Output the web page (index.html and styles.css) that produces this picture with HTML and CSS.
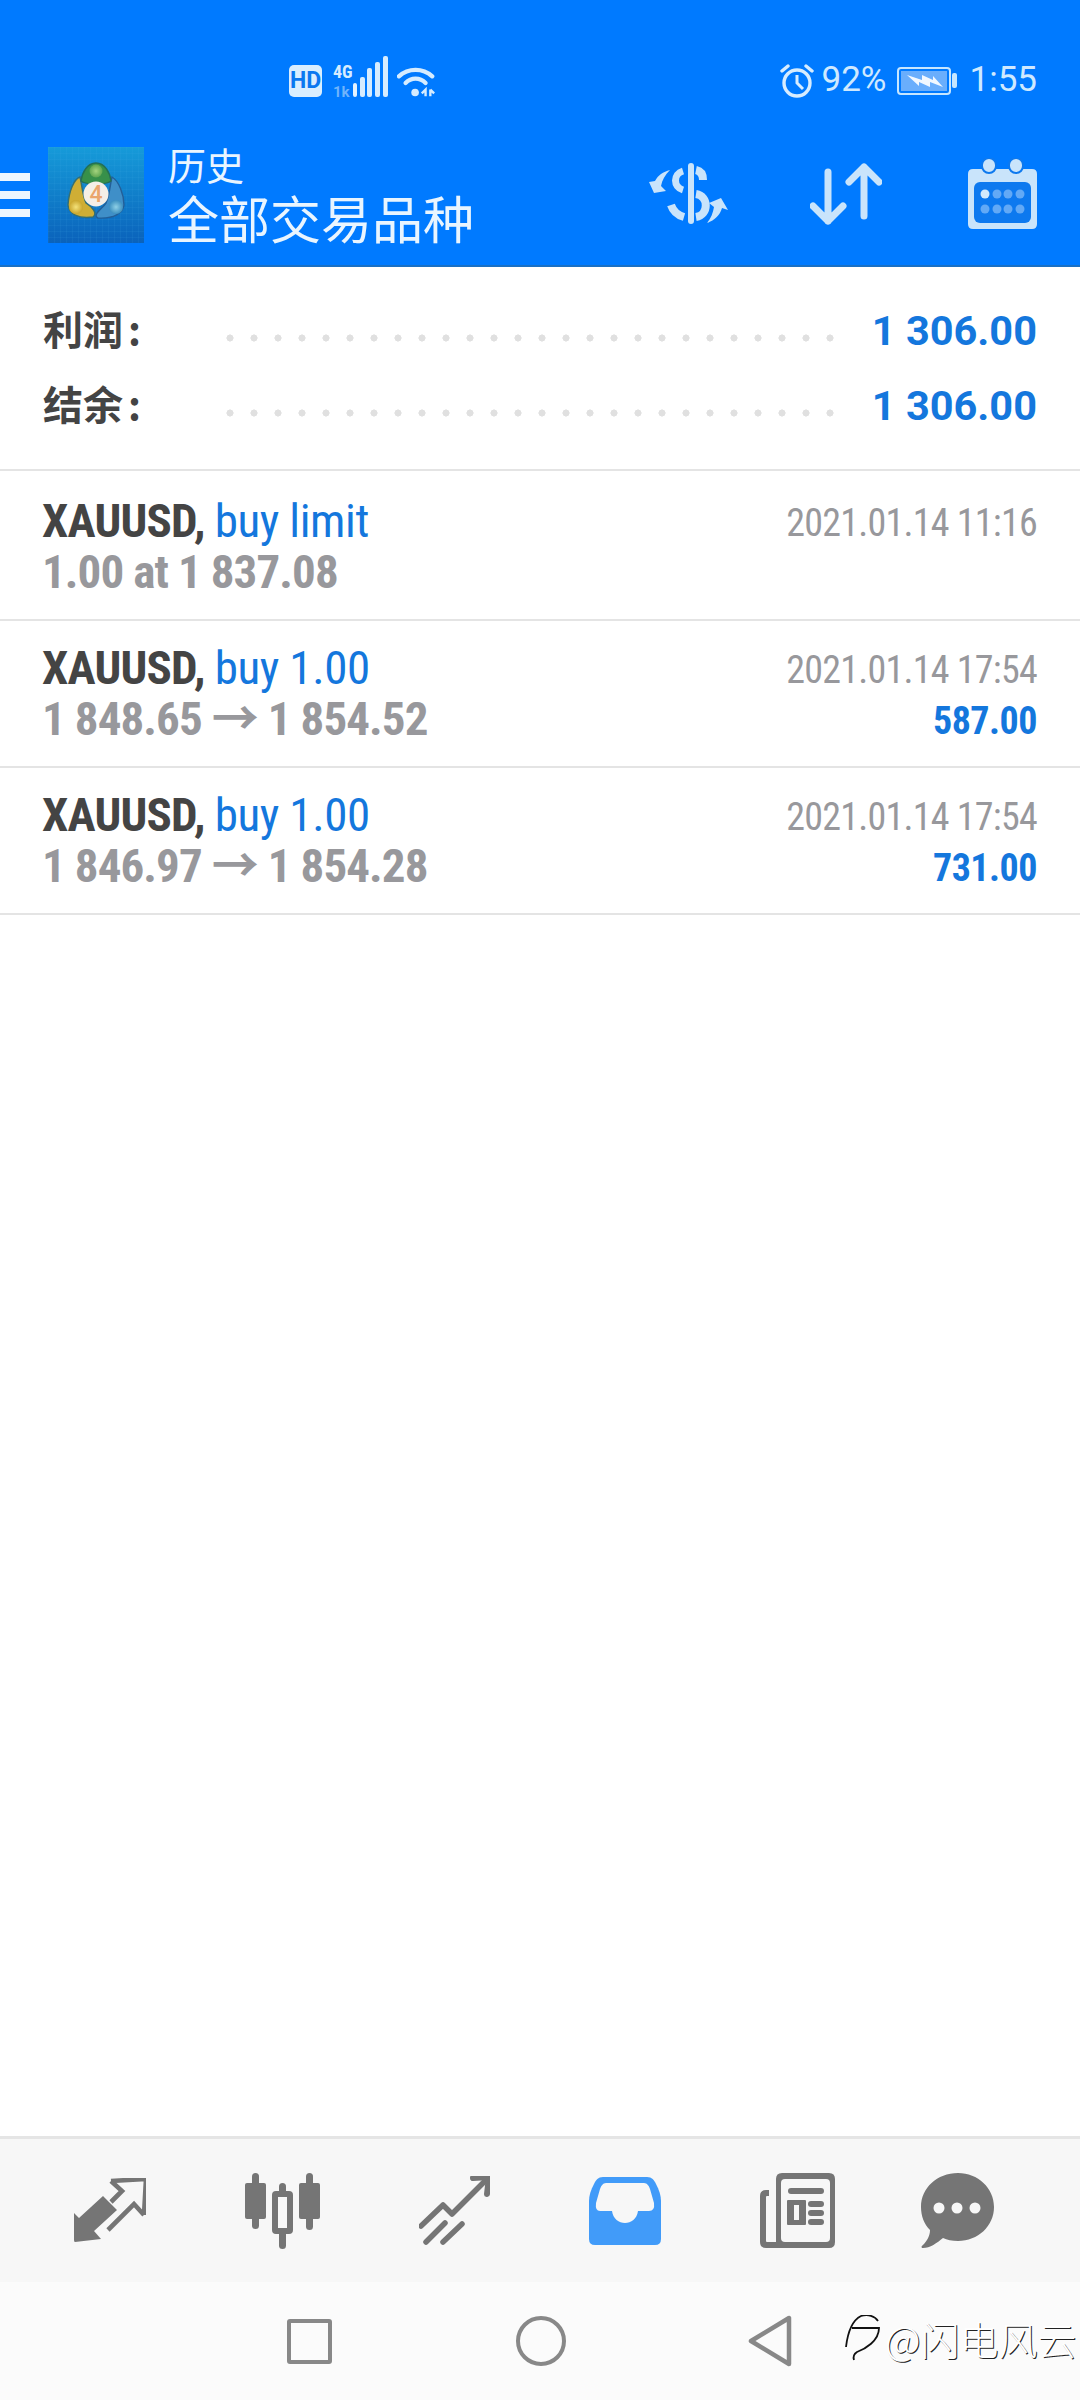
FILE: index.html
```html
<!DOCTYPE html>
<html lang="en">

<head>
  <meta charset="UTF-8">
  <meta name="viewport" content="width=device-width, initial-scale=1.0">
  <title>历史</title>
  <link rel="stylesheet" href="styles.css">
</head>

<body>
  <div class="phone">
    <header class="appbar">
      <div class="statusbar">
        <div class="status-left">
          <span class="hd-badge">HD</span>
          <div class="signal">
            <div class="signal-labels">
              <span class="net-type">4G</span>
              <span class="net-rate">1k</span>
            </div>
            <svg class="signal-bars" width="36" height="42" viewBox="0 0 36 42">
              <rect x="1" y="28" width="4" height="14" rx="2" fill="#e4f3ff" />
              <rect x="8" y="22" width="5" height="20" rx="2" fill="#d6ecff" />
              <rect x="15" y="13" width="5" height="29" rx="2" fill="#d6ecff" />
              <rect x="23" y="7" width="5" height="35" rx="2" fill="#d6ecff" />
              <rect x="31" y="1" width="5" height="41" rx="2" fill="#d6ecff" />
            </svg>
          </div>
          <svg class="wifi" width="40" height="32" viewBox="0 0 42 32">
            <path d="M2 10 C12 1 27 1 37 10" fill="none" stroke="#d6ecff" stroke-width="4.5" stroke-linecap="round" />
            <path d="M9 17 C15 11 24 11 30 17" fill="none" stroke="#d6ecff" stroke-width="4.5" stroke-linecap="round" />
            <circle cx="19" cy="27" r="4" fill="#d6ecff" />
            <path d="M30 31 L30 24 L26 28 M35 24 L35 31 M35 24 L39 28" fill="none" stroke="#d6ecff" stroke-width="2.5" />
          </svg>
        </div>
        <div class="status-right">
          <svg class="alarm" width="34" height="34" viewBox="0 0 34 34">
            <circle cx="17" cy="19" r="13" fill="none" stroke="#d6ecff" stroke-width="3.4" />
            <path d="M17 11 L17 19 L23 25" fill="none" stroke="#d6ecff" stroke-width="3" />
            <path d="M2 7 L8 2 M32 7 L26 2" stroke="#d6ecff" stroke-width="3.4" stroke-linecap="round" />
          </svg>
          <span class="status-text percent">92%</span>
          <svg class="battery" width="60" height="28" viewBox="0 0 60 28">
            <rect x="1" y="1" width="52" height="26" rx="3" fill="none" stroke="#c6e6ff" stroke-width="2" />
            <rect x="4" y="4" width="46" height="20" fill="#6aaefc" />
            <path d="M10 8 L25 13 L25 8 L36 13 L36 9 L46 20 L33 15 L33 20 L22 15 L22 19 Z" fill="#f2f8ff" />
            <rect x="55" y="6" width="5" height="15" rx="2" fill="#c6e6ff" />
          </svg>
          <span class="status-text">1:55</span>
        </div>
      </div>

      <div class="toolbar">
        <div class="menu-icon">
          <span></span>
          <span></span>
          <span></span>
        </div>
        <svg class="app-logo" width="96" height="96" viewBox="0 0 96 96">
          <defs>
            <linearGradient id="logoBg" x1="0" y1="0" x2="0" y2="1">
              <stop offset="0" stop-color="#169bd9" />
              <stop offset="1" stop-color="#0a62bb" />
            </linearGradient>
            <pattern id="logoGrid" width="6" height="6" patternUnits="userSpaceOnUse">
              <path d="M6 0 L0 0 L0 6" fill="none" stroke="#4cb4e6" stroke-opacity="0.18" />
            </pattern>
            <radialGradient id="ballGreen">
              <stop offset="0" stop-color="#a5d47f" />
              <stop offset="1" stop-color="#5fa550" />
            </radialGradient>
            <radialGradient id="ballYellow">
              <stop offset="0" stop-color="#f4e27a" />
              <stop offset="1" stop-color="#c9a52c" />
            </radialGradient>
            <radialGradient id="ballBlue">
              <stop offset="0" stop-color="#8fd0e6" />
              <stop offset="1" stop-color="#3c8fbf" />
            </radialGradient>
          </defs>
          <rect width="96" height="96" fill="url(#logoBg)" />
          <rect width="96" height="96" fill="url(#logoGrid)" />
          <path d="M32 30 C26 32 21 44 20 58 C21 67 30 72 45 70 C50 66 44 60 38 56 C34 46 34 38 32 30 Z" fill="#cfae35" stroke="#356f72" stroke-width="1.4" />
          <path d="M64 30 C71 34 76 48 76 58 C75 66 66 72 50 71 C44 68 54 62 58 56 C62 46 62 38 64 30 Z" fill="#3f8fc8" stroke="#235f98" stroke-width="1.4" />
          <path d="M48 16 C57 16 62 26 63 34 C58 38 38 38 33 34 C34 26 39 16 48 16 Z" fill="#37904a" stroke="#246f55" stroke-width="1.4" />
          <circle cx="48" cy="24" r="6.5" fill="url(#ballGreen)" />
          <circle cx="28" cy="60" r="7" fill="url(#ballYellow)" />
          <circle cx="68" cy="60" r="7" fill="url(#ballBlue)" />
          <circle cx="48" cy="47" r="12.5" fill="#f5efe7" />
          <text class="logo-digit" x="48" y="55" text-anchor="middle">4</text>
        </svg>
        <div class="toolbar-title">
          <div class="title-small">历史</div>
          <div class="title-large">全部交易品种</div>
        </div>
        <div class="toolbar-actions">
          <svg width="80" height="62" viewBox="0 0 80 62">
            <rect x="39" y="0" width="6" height="61" rx="3" fill="#c9e4fb" />
            <path d="M47 7 C52 8 54 12 54 17" fill="none" stroke="#c9e4fb" stroke-width="8" />
            <path d="M34 8 C24 11 24 24 34 27" fill="none" stroke="#c9e4fb" stroke-width="7" />
            <path d="M47 31 C60 33 60 52 47 54" fill="none" stroke="#c9e4fb" stroke-width="8" />
            <path d="M22 42 C24 48 28 52 35 54" fill="none" stroke="#c9e4fb" stroke-width="8" />
            <path d="M21 7 C14 9 9 12 6 18 L0 19 L5 30 L17 28 L12 23 C13 17 16 12 21 7 Z" fill="#c9e4fb" />
            <path d="M58 60 C66 57 71 52 73 45 L79 47 L72 35 L60 40 L65 44 C64 50 62 55 58 60 Z" fill="#c9e4fb" />
          </svg>
          <svg width="72" height="62" viewBox="0 0 72 62">
            <path d="M18 9 L18 58 M3 43 L18 58 L33 43" fill="none" stroke="#c9e4fb" stroke-width="7" stroke-linecap="round" stroke-linejoin="round" />
            <path d="M54 4 L54 53 M39 19 L54 4 L69 19" fill="none" stroke="#c9e4fb" stroke-width="7" stroke-linecap="round" stroke-linejoin="round" />
          </svg>
          <svg class="calendar-icon" width="69" height="71" viewBox="0 0 69 71">
            <path d="M5 11 H64 Q69 11 69 16 V66 Q69 71 64 71 H5 Q0 71 0 66 V16 Q0 11 5 11 Z" fill="#c9e4fb" />
            <rect x="6" y="24" width="57" height="41" rx="6" fill="#0d79ef" />
            <rect x="14" y="0" width="14" height="15" rx="7" fill="#c9e4fb" stroke="#0d79ef" stroke-width="2" />
            <rect x="41" y="0" width="14" height="15" rx="7" fill="#c9e4fb" stroke="#0d79ef" stroke-width="2" />
            <circle cx="17" cy="36" r="4.5" fill="#d4eafc" />
            <circle cx="29" cy="36" r="4.5" fill="#62a9f6" />
            <circle cx="40" cy="36" r="4.5" fill="#62a9f6" />
            <circle cx="52" cy="36" r="4.5" fill="#62a9f6" />
            <circle cx="17" cy="51" r="4.5" fill="#62a9f6" />
            <circle cx="29" cy="51" r="4.5" fill="#62a9f6" />
            <circle cx="40" cy="51" r="4.5" fill="#62a9f6" />
            <circle cx="52" cy="51" r="4.5" fill="#62a9f6" />
          </svg>
        </div>
      </div>
    </header>

    <main class="content">
      <section class="summary">
        <div class="summary-row">
          <span class="summary-label">利润 :</span>
          <span class="summary-dots"></span>
          <span class="summary-value">1 306.00</span>
        </div>
        <div class="summary-row">
          <span class="summary-label">结余 :</span>
          <span class="summary-dots"></span>
          <span class="summary-value">1 306.00</span>
        </div>
      </section>

      <section class="trade-list">
        <div class="trade-row first">
          <div>
            <div class="trade-name">XAUUSD, <span class="trade-side">buy limit</span></div>
            <div class="trade-price">1.00 at 1 837.08</div>
          </div>
          <div class="trade-right">
            <div class="trade-date">2021.01.14 11:16</div>
          </div>
        </div>
        <div class="trade-row">
          <div>
            <div class="trade-name">XAUUSD, <span class="trade-side">buy 1.00</span></div>
            <div class="trade-price">1 848.65 → 1 854.52</div>
          </div>
          <div class="trade-right">
            <div class="trade-date">2021.01.14 17:54</div>
            <div class="trade-profit">587.00</div>
          </div>
        </div>
        <div class="trade-row">
          <div>
            <div class="trade-name">XAUUSD, <span class="trade-side">buy 1.00</span></div>
            <div class="trade-price">1 846.97 → 1 854.28</div>
          </div>
          <div class="trade-right">
            <div class="trade-date">2021.01.14 17:54</div>
            <div class="trade-profit">731.00</div>
          </div>
        </div>
      </section>
    </main>

    <nav class="tabbar">
      <svg width="72" height="66" viewBox="0 0 72 66">
        <path d="M0 35 L5 40 L29 18 L43 32 L20 53 L27 61 L1 64 Q0 64 0 62 Z" fill="#757575" />
        <path d="M37 3 L72 1 L70 37 M37 3 L48 13 L37 24 M34 52 L60 26 L70 37" fill="none" stroke="#757575" stroke-width="4.6" />
      </svg>
      <svg width="75" height="76" viewBox="0 0 75 76">
        <rect x="0" y="10" width="21" height="36" rx="2" fill="#757575" />
        <rect x="7" y="0" width="7" height="56" rx="3.5" fill="#757575" />
        <rect x="54" y="10" width="21" height="36" rx="2" fill="#757575" />
        <rect x="61" y="0" width="7" height="57" rx="3.5" fill="#757575" />
        <rect x="34" y="10" width="7" height="66" rx="3.5" fill="#757575" />
        <rect x="30" y="21" width="15" height="37" rx="1" fill="#f7f7f7" stroke="#757575" stroke-width="6" />
      </svg>
      <svg width="71" height="69" viewBox="0 0 71 69">
        <path d="M2 50 L24 29 L33 38 L66 5" fill="none" stroke="#757575" stroke-width="5.5" stroke-linecap="round" stroke-linejoin="round" />
        <path d="M54 2 L70 1 L68 18" fill="none" stroke="#757575" stroke-width="6" stroke-linecap="round" stroke-linejoin="round" />
        <path d="M7 66 L26 47 M24 66 L43 48" fill="none" stroke="#757575" stroke-width="5.5" stroke-linecap="round" />
      </svg>
      <svg width="72" height="68" viewBox="0 0 72 68">
        <path d="M14 0 H58 C63 0 65 3 67 7 C70 13 72 18 72 24 V62 Q72 68 66 68 H6 Q0 68 0 62 V24 C0 18 2 13 5 7 C7 3 9 0 14 0 Z" fill="#419bf9" />
        <path d="M17 6 H55 C58 6 60 9 61 12 L65 26 Q66 34 60 34 H49 C47 50 25 50 23 34 H11 Q6 34 7 26 L11 12 C12 9 14 6 17 6 Z" fill="#f7f7f7" />
      </svg>
      <svg width="75" height="75" viewBox="0 0 75 75">
        <path d="M16 6 Q16 0 22 0 H69 Q75 0 75 6 V69 Q75 75 69 75 H6 Q0 75 0 69 V23 Q0 17 6 17 H9 V23 H7 Q6 23 6 24 V68 Q6 69 7 69 H16 Z" fill="#757575" />
        <rect x="21" y="6" width="49" height="63" rx="4" fill="#f7f7f7" />
        <rect x="28" y="15" width="36" height="6" rx="3" fill="#757575" />
        <rect x="27" y="27" width="19" height="25" rx="1" fill="#757575" />
        <rect x="34" y="32" width="5" height="15" fill="#f7f7f7" />
        <rect x="48" y="28" width="16" height="6" rx="3" fill="#757575" />
        <rect x="48" y="37" width="16" height="6" rx="3" fill="#757575" />
        <rect x="48" y="46" width="16" height="6" rx="3" fill="#757575" />
      </svg>
      <svg class="chat-icon" width="73" height="75" viewBox="0 0 73 75">
        <path d="M37 0 C57 0 73 15 73 34 C73 53 57 68 37 68 C31 68 26 67 22 65 C16 70 9 75 2 75 C0 75 0 73 2 72 C6 68 9 63 9 57 C3 51 0 43 0 34 C0 15 16 0 37 0 Z" fill="#757575" />
        <circle cx="18" cy="35" r="5.5" fill="#f7f7f7" />
        <circle cx="36" cy="35" r="5.5" fill="#f7f7f7" />
        <circle cx="54" cy="35" r="5.5" fill="#f7f7f7" />
      </svg>
    </nav>

    <div class="navbar">
      <span class="nav-square"></span>
      <span class="nav-circle"></span>
      <svg class="nav-back" width="44" height="52" viewBox="0 0 44 52">
        <path d="M3 26 L41 3 L41 49 Z" fill="none" stroke="#888" stroke-width="4.5" stroke-linejoin="round" />
      </svg>
      <!-- watermark sits on top of the nav bar -->
      <div class="watermark">
        <svg width="38" height="46" viewBox="0 0 38 46">
          <path d="M1 32 C3 15 8 5 16 1 C23 -1 30 1 33 6" fill="none" stroke="#111" stroke-width="1.8" />
          <path d="M7 13 H34 C34 26 20 34 12 37 C9 39 8 42 9 45" fill="none" stroke="#111" stroke-width="1.8" />
        </svg>
        <span>@闪电风云</span>
      </div>
    </div>
  </div>
</body>

</html>
```

FILE: styles.css
```css
* {
  box-sizing: border-box;
}

body {
  margin: 0;
  padding: 0;
  background-color: #fff;
  font-family: Roboto, 'Noto Sans CJK SC', sans-serif;
}

.phone {
  width: 1080px;
  height: 2400px;
  display: flex;
  flex-direction: column;
  overflow: hidden;
}

/* Top blue area */
.appbar {
  height: 267px;
  background-color: #007aff;
  border-bottom: 2px solid #1a70c4;
}

.statusbar {
  height: 128px;
  display: flex;
  justify-content: space-between;
  padding: 64px 43px 0 289px;
}

.status-left,
.status-right {
  display: flex;
  align-items: flex-start;
}

.hd-badge {
  width: 33px;
  height: 32px;
  margin-top: 1px;
  background-color: #d9eeff;
  border-radius: 5px;
  color: #0a78f0;
  font-size: 23px;
  font-weight: 700;
  line-height: 32px;
  text-align: center;
}

.signal {
  display: flex;
  margin-left: 11px;
}

.signal-labels {
  display: flex;
  flex-direction: column;
  width: 19px;
}

.net-type {
  color: #d6ecff;
  font-size: 18px;
  font-stretch: 75%;
  font-weight: 700;
  line-height: 16px;
}

.net-rate {
  margin-top: 5px;
  color: #6fb4fb;
  font-size: 15px;
  font-weight: 700;
  line-height: 15px;
}

.signal-bars {
  margin-top: -9px;
}

.wifi {
  margin: 2px 0 0 9px;
}

.status-text {
  margin-top: -1px;
  color: #cfe9ff;
  font-size: 35px;
  line-height: 34px;
}

.percent {
  margin: -1px 10px 0 8px;
}

.battery {
  margin: 3px 13px 0 0;
}

.toolbar {
  height: 134px;
  display: flex;
  align-items: center;
  padding-right: 43px;
}

.menu-icon {
  display: flex;
  flex-direction: column;
  gap: 10px;
  width: 30px;
}

.menu-icon span {
  height: 8px;
  background-color: #ecf6ff;
}

.app-logo {
  margin-left: 18px;
}

.logo-digit {
  fill: #eaa56c;
  font-family: Roboto, sans-serif;
  font-size: 23px;
  font-weight: 500;
}

.toolbar-title {
  margin-left: 24px;
  color: #e9f5ff;
  font-family: 'Noto Sans CJK SC', sans-serif;
}

.title-small {
  font-size: 38px;
  line-height: 44px;
}

.title-large {
  font-size: 51px;
  line-height: 62px;
}

.toolbar-actions {
  display: flex;
  align-items: center;
  gap: 81px;
  margin: -3px 0 0 auto;
}

.calendar-icon {
  margin-left: 5px;
}

/* Summary and trades */
.content {
  flex: 1;
  background-color: #fff;
}

.summary {
  padding: 26px 43px 26px;
  border-bottom: 2px solid #e4e4e4;
}

.summary-row {
  display: flex;
  align-items: center;
  height: 75px;
}

.summary-label {
  width: 175px;
  margin-top: -6px;
  color: #444;
  font-family: 'Noto Sans CJK SC', sans-serif;
  font-size: 40px;
  font-weight: 700;
  word-spacing: -4px;
}

.summary-dots {
  width: 624px;
  height: 8px;
  margin-top: 14px;
  background-image: radial-gradient(circle, #e0e0e0 3.3px, transparent 3.8px);
  background-size: 24px 8px;
  background-repeat: repeat-x;
}

.summary-value {
  margin-left: auto;
  color: #1477dd;
  font-size: 41.5px;
  font-weight: 700;
  white-space: nowrap;
}

.trade-row {
  display: flex;
  justify-content: space-between;
  padding: 21px 43px 22px 42px;
  border-bottom: 2px solid #e4e4e4;
}

.trade-row.first {
  padding-top: 24px;
}

.trade-name,
.trade-price,
.trade-date,
.trade-profit {
  font-stretch: 75%;
  line-height: 51px;
  white-space: nowrap;
}

.trade-name {
  color: #444;
  font-size: 47px;
  font-weight: 700;
  letter-spacing: -0.8px;
}

.trade-side {
  color: #1477dd;
  font-weight: 400;
  letter-spacing: -0.4px;
}

.trade-price {
  color: #98989c;
  font-size: 47px;
  font-weight: 700;
  letter-spacing: -0.9px;
}

.trade-right {
  margin: 3px 0 -3px;
  text-align: right;
}

.trade-date {
  color: #98989c;
  font-size: 38px;
  letter-spacing: -0.75px;
}

.trade-profit {
  color: #1477dd;
  font-size: 38px;
  font-weight: 700;
  letter-spacing: -0.5px;
}

/* Bottom bars */
.tabbar {
  height: 146px;
  display: flex;
  align-items: center;
  gap: 99px;
  padding-left: 74px;
  background-color: #f7f7f7;
  border-top: 3px solid #e5e5e5;
}

.tabbar svg {
  flex-shrink: 0;
}

.tabbar .chat-icon {
  margin-left: -13px;
}

.navbar {
  position: relative;
  height: 118px;
  display: flex;
  align-items: center;
  padding-left: 287px;
  background-color: #fbfbfb;
}

.nav-square {
  width: 45px;
  height: 45px;
  border: 4px solid #888;
  border-radius: 3px;
}

.nav-circle {
  width: 50px;
  height: 50px;
  margin-left: 184px;
  border: 4px solid #888;
  border-radius: 50%;
}

.nav-back {
  margin-left: 182px;
}

.watermark {
  position: absolute;
  top: 28px;
  left: 845px;
  display: flex;
  align-items: center;
  gap: 2px;
  color: #fff;
  font-family: 'Noto Sans CJK SC', sans-serif;
  font-size: 39px;
  font-weight: 300;
  text-shadow: 1px 1px 0 #222;
  white-space: nowrap;
}
```
